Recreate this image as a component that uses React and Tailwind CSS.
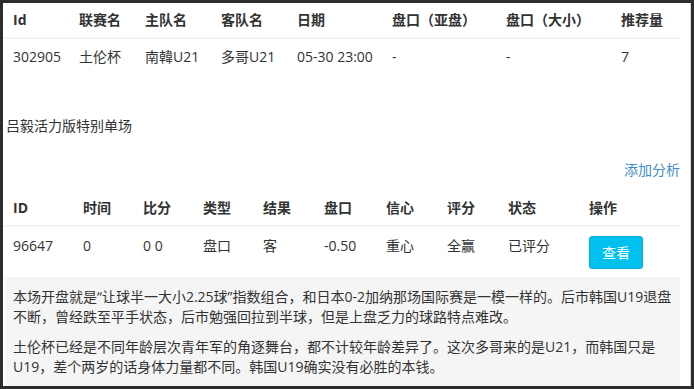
import React from 'react';

const font = { fontFamily: '"Open Sans", "Noto Sans CJK SC", sans-serif' };

const matchCols = [
  ['Id', 66], ['联赛名', 66], ['主队名', 76], ['客队名', 76], ['日期', 95],
  ['盘口（亚盘）', 114], ['盘口（大小）', 115], ['推荐量', 67],
];
const matchRow = ['302905', '土伦杯', '南韓U21', '多哥U21', '05-30 23:00', '-', '-', '7'];

const tipCols = [
  ['ID', 70], ['时间', 60], ['比分', 60], ['类型', 60], ['结果', 61],
  ['盘口', 62], ['信心', 61], ['评分', 61], ['状态', 81], ['操作', 99],
];
const tipRow = ['96647', '0', '0 0', '盘口', '客', '-0.50', '重心', '全赢', '已评分'];

function App() {
  return (
    <div className="w-[694px] h-[389px] bg-[#2d2d2d] pt-[3px] pl-[3px] overflow-hidden" style={font}>
      <div className="w-[688px] h-[383px] bg-white border-r border-[#d9d9d9] pl-[2px] pr-[10px] overflow-hidden text-[14px] leading-5 text-[#333]">
        <table className="table-fixed w-[675px] border-collapse">
          <colgroup>
            {matchCols.map(([, w], i) => <col key={i} style={{ width: w }} />)}
          </colgroup>
          <thead>
            <tr>
              {matchCols.map(([t], i) => (
                <th key={i} className="text-left font-bold px-2 py-[7px] border-b-2 border-[#f2f2f2] whitespace-nowrap">{t}</th>
              ))}
            </tr>
          </thead>
          <tbody>
            <tr>
              {matchRow.map((t, i) => (
                <td key={i} className="px-2 py-2 whitespace-nowrap align-top">{t}</td>
              ))}
            </tr>
          </tbody>
        </table>

        <div className="mt-[41px] pl-px">吕毅活力版特别单场</div>
        <div className="mt-[24px] text-right text-[#428bca]">添加分析</div>

        <table className="table-fixed w-[675px] border-collapse mt-[11px]">
          <colgroup>
            {tipCols.map(([, w], i) => <col key={i} style={{ width: w }} />)}
          </colgroup>
          <thead>
            <tr>
              {tipCols.map(([t], i) => (
                <th key={i} className="text-left font-bold px-2 py-[7px] border-b-2 border-[#f2f2f2] whitespace-nowrap">{t}</th>
              ))}
            </tr>
          </thead>
          <tbody>
            <tr>
              {tipRow.map((t, i) => (
                <td key={i} className="px-2 pt-[9px] pb-2 whitespace-nowrap align-top">{t}</td>
              ))}
              <td className="px-2 pt-[9px] pb-2 align-top">
                <button className="h-[33px] w-[54px] rounded-[3px] bg-[#00c0ef] border border-[#00acd6] text-white text-[14px]">查看</button>
              </td>
            </tr>
          </tbody>
        </table>

        <div className="bg-[#f5f5f5] pt-[10px] px-2 pb-2">
          <p className="mb-[10px]">本场开盘就是“让球半一大小2.25球”指数组合，和日本0-2加纳那场国际赛是一模一样的。后市韩国U19退盘不断，曾经跌至平手状态，后市勉强回拉到半球，但是上盘乏力的球路特点难改。</p>
          <p className="mb-[10px]">土伦杯已经是不同年龄层次青年军的角逐舞台，都不计较年龄差异了。这次多哥来的是U21，而韩国只是U19，差个两岁的话身体力量都不同。韩国U19确实没有必胜的本钱。</p>
        </div>
      </div>
    </div>
  );
}

export default App;
